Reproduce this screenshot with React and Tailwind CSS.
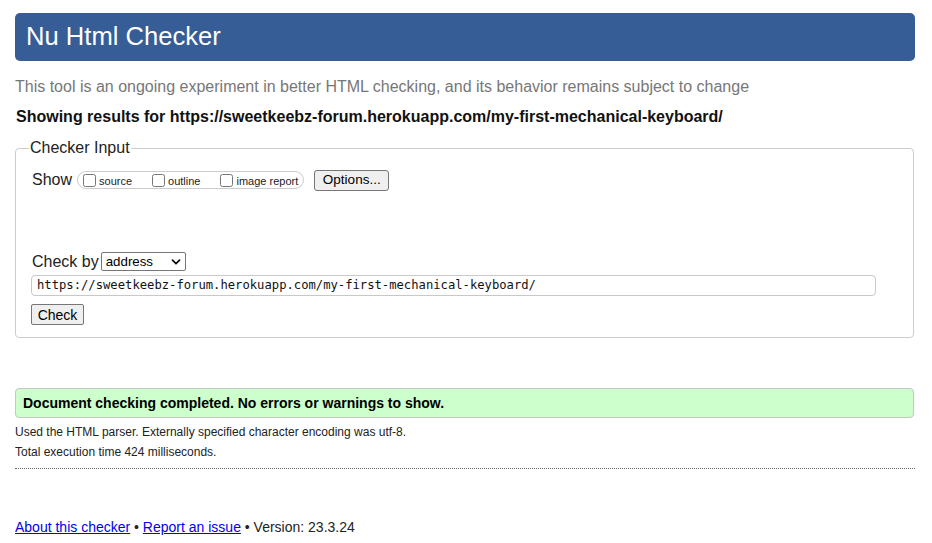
export default function App() {
  const sans = { fontFamily: '"Liberation Sans", Arial, sans-serif' };

  return (
    <div className="min-h-[543px] bg-white text-black pt-[13px]" style={sans}>
      <div className="w-[900px] ml-[15px]">
        <h1 className="h-[48px] rounded-[5px] bg-[#365d95] text-white text-[25.6px] pl-[11px] flex items-center leading-none">
          Nu Html Checker
        </h1>

        <p className="mt-[17px] text-[16px] leading-[18px] text-[#777777]">
          This tool is an ongoing experiment in better HTML checking, and its behavior remains subject to change
        </p>
        <p className="mt-[12px] ml-[1px] text-[16px] leading-[18px] font-bold text-[#111]">
          Showing results for https://sweetkeebz-forum.herokuapp.com/my-first-mechanical-keyboard/
        </p>

        <fieldset className="mt-[13px] w-[899px] border border-[#cccccc] rounded-[4px] pl-[15px] pr-[16px] pb-[12px]">
          <legend className="px-[1px] ml-[-2px] text-[16px] leading-[18px] text-[#222]">Checker Input</legend>

          <div className="mt-[13px] h-[20px] flex items-center">
            <span className="ml-[1px] text-[16px] leading-[18px] text-[#222]">Show</span>
            <span className="ml-[5px] h-[18px] flex items-center border border-[#cccccc] rounded-[9px] pl-[5px] pr-[5px] text-[11px] text-[#222]">
              <label className="flex items-center">
                <input type="checkbox" className="m-0 w-[13px] h-[13px]" />
                <span className="ml-[3px] mt-[2px]">source</span>
              </label>
              <label className="flex items-center ml-[20px]">
                <input type="checkbox" className="m-0 w-[13px] h-[13px]" />
                <span className="ml-[3px] mt-[2px]">outline</span>
              </label>
              <label className="flex items-center ml-[20px]">
                <input type="checkbox" className="m-0 w-[13px] h-[13px]" />
                <span className="ml-[3px] mt-[2px]">image report</span>
              </label>
            </span>
            <button className="ml-[10px] h-[21px] w-[75px] bg-[#efefef] border border-[#767676] rounded-[3px] text-[13.5px] leading-none text-black">
              Options...
            </button>
          </div>

          <div className="mt-[62px] h-[19px] flex items-center">
            <span className="ml-[1px] text-[16px] leading-[18px] text-[#222]">Check by</span>
            <span className="ml-[2px] h-[19px] w-[85px] flex items-center justify-between border border-[#767676] rounded-[2px] pl-[4px] pr-[4px] text-[13.3px] text-black bg-white">
              address
              <svg width="10" height="10" viewBox="0 0 10 10" fill="none">
                <path d="M1.5 3.2 L5 6.7 L8.5 3.2" stroke="#111" strokeWidth="1.8" strokeLinecap="round" strokeLinejoin="round" />
              </svg>
            </span>
          </div>

          <div
            className="mt-[4px] h-[21px] w-[845px] border border-[#c8c8c8] rounded-[4px] pl-[5px] flex items-center text-[12.2px] text-[#111]"
            style={{ fontFamily: '"DejaVu Sans Mono", "Liberation Mono", monospace' }}
          >
            https://sweetkeebz-forum.herokuapp.com/my-first-mechanical-keyboard/
          </div>

          <button className="mt-[8px] block h-[21px] w-[53px] bg-[#efefef] border border-[#767676] rounded-[2px] text-[14px] leading-none text-black">
            Check
          </button>
        </fieldset>

        <div className="mt-[50px] w-[899px] h-[30px] bg-[#ccffcc] border border-[#c6c6c6] rounded-[4px] pl-[7px] flex items-center text-[14px] font-bold text-black">
          Document checking completed. No errors or warnings to show.
        </div>

        <p className="mt-[4px] text-[12px] leading-[20px] text-[#222]">
          Used the HTML parser. Externally specified character encoding was utf-8.
        </p>
        <p className="text-[12px] leading-[20px] text-[#222]">Total execution time 424 milliseconds.</p>

        <div className="mt-[6px] border-t border-dotted border-[#666]" />

        <p className="mt-[50px] text-[14px] leading-[16px] text-[#222]">
          <a href="#" className="text-[#0000ee] underline">About this checker</a>
          {' • '}
          <a href="#" className="text-[#0000ee] underline">Report an issue</a>
          {' • Version: 23.3.24'}
        </p>
      </div>
    </div>
  );
}
